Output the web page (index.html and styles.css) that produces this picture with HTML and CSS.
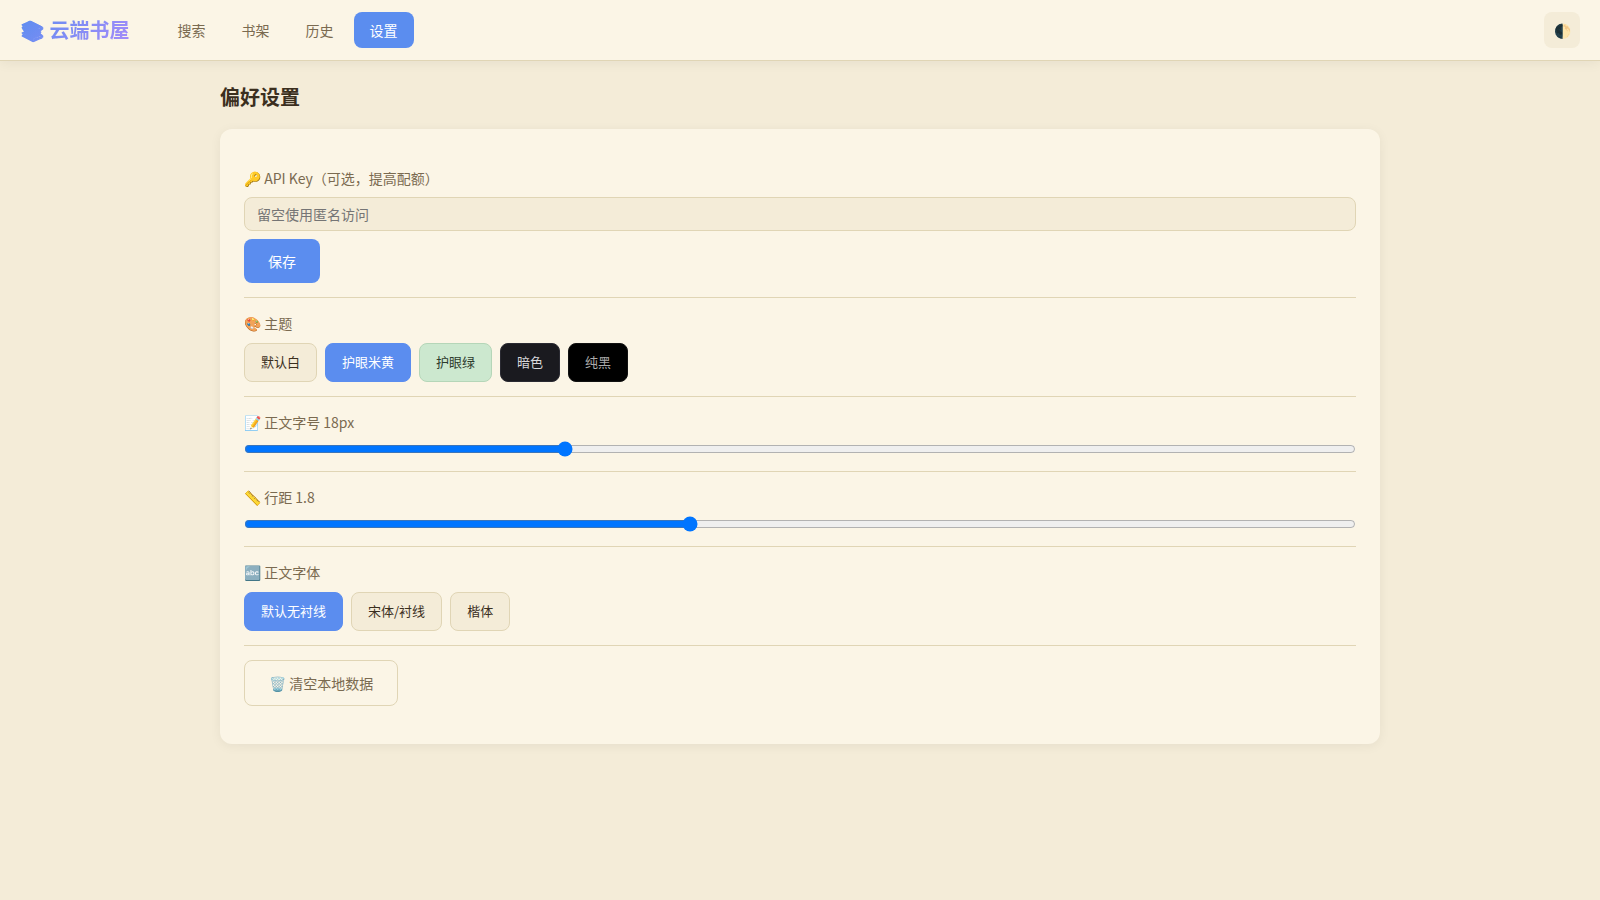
FILE: index.html
```html
<!DOCTYPE html>
<html lang="zh-CN">
<head>
  <meta charset="UTF-8" />
  <meta name="viewport" content="width=device-width, initial-scale=1.0" />
  <title>云端书屋</title>
  <link rel="stylesheet" href="styles.css">
</head>
<body>
  <header class="header">
    <div class="logo">📚 云端书屋</div>
    <nav class="nav">
      <button type="button">搜索</button>
      <button type="button">书架</button>
      <button type="button">历史</button>
      <button type="button" class="active">设置</button>
    </nav>
    <button type="button" class="icon-btn" aria-label="切换主题">🌓</button>
  </header>

  <main class="main">
    <h2>偏好设置</h2>

    <div class="settings">
      <div class="setting">
        <label for="apiKey">🔑 API Key（可选，提高配额）</label>
        <input type="text" id="apiKey" placeholder="留空使用匿名访问" />
        <button type="button" class="btn btn-primary">保存</button>
      </div>

      <div class="setting">
        <div class="setting-label">🎨 主题</div>
        <div class="options">
          <button type="button" class="option">默认白</button>
          <button type="button" class="option active">护眼米黄</button>
          <button type="button" class="option theme-green">护眼绿</button>
          <button type="button" class="option theme-dark">暗色</button>
          <button type="button" class="option theme-black">纯黑</button>
        </div>
      </div>

      <div class="setting">
        <label for="fontSize">📝 正文字号 <span id="fontSizeValue">18</span>px</label>
        <input type="range" id="fontSize" min="14" max="28" value="18" />
      </div>

      <div class="setting">
        <label for="lineHeight">📏 行距 <span id="lineHeightValue">1.8</span></label>
        <input type="range" id="lineHeight" min="1.4" max="2.4" step="0.1" value="1.8" />
      </div>

      <div class="setting">
        <div class="setting-label">🔤 正文字体</div>
        <div class="options">
          <button type="button" class="option active">默认无衬线</button>
          <button type="button" class="option">宋体/衬线</button>
          <button type="button" class="option">楷体</button>
        </div>
      </div>

      <div class="setting">
        <button type="button" class="btn btn-outline">🗑️ 清空本地数据</button>
      </div>
    </div>
  </main>

  <script>
    ["fontSize", "lineHeight"].forEach(id => {
      document.getElementById(id).addEventListener("input", e => {
        document.getElementById(id + "Value").textContent = e.target.value;
      });
    });

    document.querySelectorAll(".options").forEach(group => {
      group.addEventListener("click", e => {
        if (!e.target.classList.contains("option")) return;
        group.querySelectorAll(".option").forEach(o => o.classList.remove("active"));
        e.target.classList.add("active");
      });
    });
  </script>
</body>
</html>
```
FILE: styles.css
```css
:root {
  --bg: #f4ecd8;
  --surface: #fbf5e6;
  --border: #e0d5b5;
  --text: #3b2f1e;
  --text-muted: #7a6a50;
  --primary: #5b8def;
}

* {
  box-sizing: border-box;
  margin: 0;
  padding: 0;
}

body {
  font-family: "Noto Sans CJK SC", sans-serif;
  line-height: 1.6;
  background: var(--bg);
  color: var(--text);
  min-height: 100vh;
}

button, input {
  font-family: inherit;
}

button {
  cursor: pointer;
}

.header {
  display: flex;
  align-items: center;
  padding: 12px 20px;
  background: var(--surface);
  border-bottom: 1px solid var(--border);
  box-shadow: 0 2px 12px rgba(0, 0, 0, 0.06);
}

.logo {
  font-size: 20px;
  font-weight: 700;
  background: linear-gradient(135deg, #5b8def, #a78bfa);
  -webkit-background-clip: text;
  background-clip: text;
  color: transparent;
}

.nav {
  display: flex;
  gap: 4px;
  margin-left: 32px;
}

.nav button {
  height: 36px;
  padding: 0 16px;
  border: none;
  border-radius: 8px;
  background: transparent;
  color: var(--text-muted);
  font-size: 14px;
}

.nav button.active {
  background: var(--primary);
  color: #fff;
}

.icon-btn {
  width: 36px;
  height: 36px;
  margin-left: auto;
  border: none;
  border-radius: 8px;
  background: var(--bg);
  color: var(--text);
  font-size: 14px;
}

.main {
  max-width: 1200px;
  margin: 0 auto;
  padding: 20px;
}

h2 {
  margin-bottom: 16px;
  font-size: 20px;
}

.settings {
  padding: 24px;
  background: var(--surface);
  border-radius: 12px;
  box-shadow: 0 2px 12px rgba(0, 0, 0, 0.06);
}

.setting {
  padding: 14px 0;
  border-bottom: 1px solid var(--border);
}

.setting:last-child {
  border-bottom: none;
}

.setting label, .setting-label {
  display: block;
  margin-bottom: 8px;
  font-size: 14px;
  color: var(--text-muted);
}

input[type="text"] {
  display: block;
  width: 100%;
  margin-bottom: 8px;
  padding: 6px 12px;
  border: 1px solid var(--border);
  border-radius: 8px;
  background: var(--bg);
  color: var(--text);
  font-size: 14px;
}

input[type="range"] {
  display: block;
  width: 100%;
}

.btn {
  display: block;
  padding: 12px 24px;
  border: none;
  border-radius: 8px;
  font-size: 14px;
}

.btn-primary {
  background: var(--primary);
  color: #fff;
}

.btn-outline {
  border: 1px solid var(--border);
  background: transparent;
  color: var(--text-muted);
}

.options {
  display: flex;
  flex-wrap: wrap;
  gap: 8px;
}

.option {
  padding: 8px 16px;
  border: 1px solid var(--border);
  border-radius: 8px;
  background: var(--bg);
  color: var(--text);
  font-size: 13px;
  line-height: 1.6;
}

.theme-green {
  background: #cce8cf;
  border-color: #b5d6b8;
  color: #2d3b2d;
}

.theme-dark {
  background: #1a1a1f;
  border-color: #2a2a32;
  color: #d8d8dc;
}

.theme-black {
  background: #000;
  border-color: #111;
  color: #aaa;
}

.option.active {
  background: var(--primary);
  border-color: var(--primary);
  color: #fff;
}
```
